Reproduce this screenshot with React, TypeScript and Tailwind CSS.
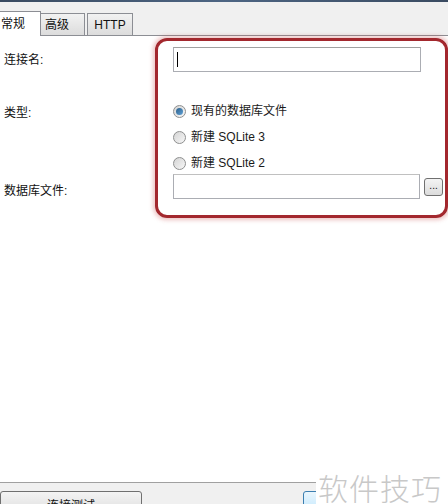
import React, { useState } from 'react';

const font = { fontFamily: '"Liberation Sans", "Noto Sans CJK SC", sans-serif' };

const Radio: React.FC<{ checked: boolean; label: string; onClick: () => void }> = ({ checked, label, onClick }) => (
  <div className="flex items-center h-[26px] cursor-default" onClick={onClick}>
    <span className="w-[13px] h-[13px] rounded-full border border-[#8e8f8f] bg-gradient-to-br from-[#d4d4d4] to-[#f7f7f7] flex items-center justify-center">
      {checked && <span className="w-[7px] h-[7px] rounded-full bg-gradient-to-br from-[#2c5f8a] to-[#5fa1d6]" />}
    </span>
    <span className="ml-[5px] text-[12px] text-[#1a1a1a]">{label}</span>
  </div>
);

const App: React.FC = () => {
  const [type, setType] = useState(0);
  const types = ['现有的数据库文件', '新建 SQLite 3', '新建 SQLite 2'];

  return (
    <div className="w-[448px] h-[504px] overflow-hidden bg-[#f0f0f0] flex flex-col" style={font}>
      <div className="h-[2px] bg-gradient-to-r from-[#3a4b61] via-[#4d6583] to-[#3a4b61]" />
      {/* Tabs */}
      <div className="h-[33px] flex items-end relative">
        <div className="h-[25px] w-[41px] bg-white border-t border-r border-[#8c8e94] flex items-center pl-[1px] text-[12px] text-[#111] relative z-10 mb-[-1px]">
          常规
        </div>
        <div className="h-[22px] w-[44px] bg-gradient-to-b from-[#f2f2f2] to-[#dcdcdc] border border-b-0 border-[#8c8e94] border-l-0 flex items-center pl-[4px] text-[12px] text-[#111]">
          高级
        </div>
        <div className="h-[22px] w-[46px] ml-[2px] bg-gradient-to-b from-[#f2f2f2] to-[#dcdcdc] border border-b-0 border-[#8c8e94] flex items-center justify-center text-[12px] text-[#111]">
          HTTP
        </div>
      </div>
      {/* Content */}
      <div className="h-[447px] bg-white border-t border-[#8c8e94] flex">
        <div className="w-[157px] flex flex-col text-[12px] text-[#111] pl-[4px]">
          <div className="mt-[15px] h-[16px]">连接名:</div>
          <div className="mt-[37px] h-[16px]">类型:</div>
          <div className="mt-[62px] h-[16px]">数据库文件:</div>
        </div>
        <div className="mt-[2px] w-[293px] h-[180px] border-[3px] border-[#a3282e] rounded-[12px] shadow-[0_0_4px_2px_rgba(200,80,80,0.35)] flex flex-col pl-[15px] pr-[2px]">
          <div className="mt-[6px] h-[25px] w-[248px] border border-[#abadb3] border-t-[#a0a0a0] flex items-center pl-[3px]">
            <span className="w-px h-[15px] bg-black" />
          </div>
          <div className="mt-[26px] flex flex-col">
            {types.map((t, i) => (
              <Radio key={t} checked={type === i} label={t} onClick={() => setType(i)} />
            ))}
          </div>
          <div className="mt-[-2px] flex items-center">
            <div className="h-[25px] w-[248px] border border-[#abadb3] border-t-[#c0c0c0]" />
            <button className="ml-[4px] w-[19px] h-[18px] rounded-[3px] border border-[#707070] bg-gradient-to-b from-[#f4f4f4] to-[#dcdcdc] text-[10px] leading-none flex items-end justify-center pb-[4px] text-[#111]">
              ...
            </button>
          </div>
        </div>
      </div>
      {/* Bottom bar */}
      <div className="flex-1 relative border-t border-[#a0a0a0] bg-[#f0f0f0]">
        <button className="absolute left-0 top-[8px] w-[142px] h-[24px] border border-[#707070] rounded-[3px] bg-gradient-to-b from-[#f4f4f4] to-[#dddddd] text-[12px] text-[#111] flex items-start justify-center pt-[5px]">
          连接测试
        </button>
        <button className="absolute left-[303px] top-[8px] w-[40px] h-[24px] border border-[#3c7fb1] rounded-[3px] bg-gradient-to-b from-[#eaf6fd] to-[#bee6fd]" />
      </div>
      <div className="absolute left-[316px] top-[470px] w-[132px] h-[34px] bg-white flex items-center pl-[2px] text-[30px] text-[#c8c8c8] tracking-[1px]" style={{ fontFamily: '"Noto Sans CJK SC", sans-serif', fontWeight: 300 }}>
        软件技巧
      </div>
    </div>
  );
};

export default App;
